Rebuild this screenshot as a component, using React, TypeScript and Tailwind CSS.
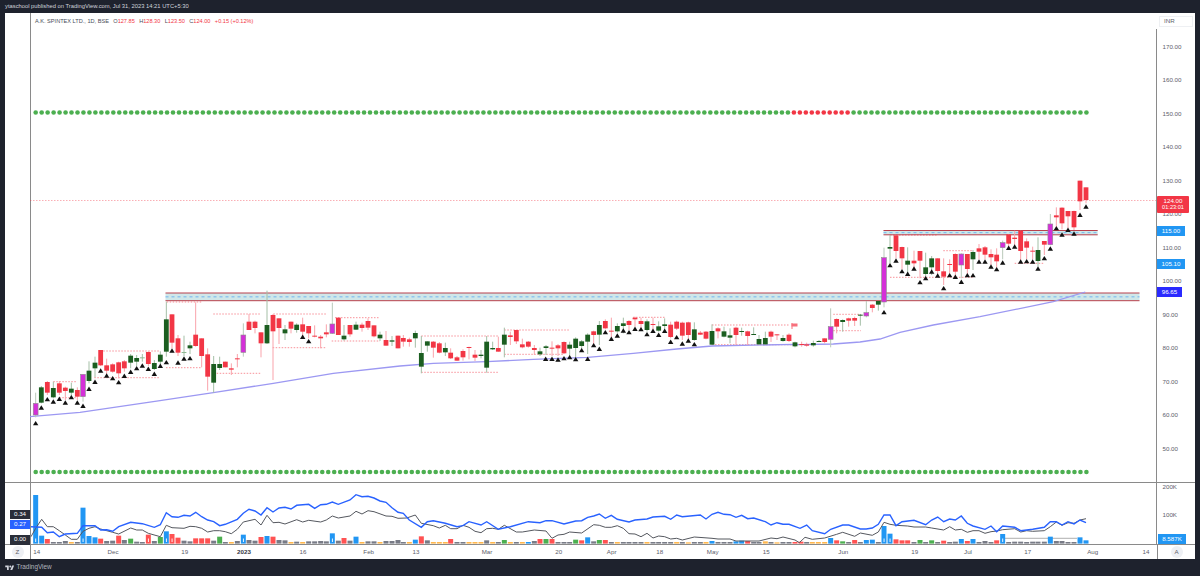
import React from "react";

type C = [number, number, number, number, number, string];
const z2: C[] = [[107,370,405,338,412,"p"],[124,322,368,318,370,"g"],[142,306,338,303,345,"r"],[160,324,352,305,355,"g"],[178,310,338,303,345,"r"],[196,323,333,320,360,"r"],[214,326,338,308,350,"g"],[232,330,350,322,360,"r"],[249,283,350,283,365,"p"],[267,272,303,244,310,"g"],[285,248,265,230,292,"g"],[302,210,256,210,258,"r"],[320,256,272,236,282,"r"],[338,253,275,250,278,"r"],[356,247,280,245,295,"r"],[373,244,265,240,275,"r"],[392,227,248,222,265,"g"],[410,234,245,225,258,"g"],[427,232,234,222,245,"l"],[445,216,252,214,258,"r"],[463,249,267,240,270,"g"],[481,224,245,214,252,"g"],[499,118,215,65,230,"g"],[516,103,188,103,205,"r"],[534,175,218,165,228,"r"],[552,216,219,167,228,"l"],[570,196,205,185,222,"g"],[587,164,198,67,200,"r"],[605,175,228,175,262,"r"],[623,223,290,205,332,"r"],[641,252,308,228,338,"g"],[659,252,264,230,270,"g"],[676,245,262,245,262,"r"],[694,265,269,250,285,"r"],[712,235,238,222,262,"r"],[730,165,217,130,230,"p"],[747,125,150,102,150,"r"],[765,125,144,122,160,"r"],[783,157,190,157,232,"r"],[801,135,190,32,192,"g"],[819,105,154,102,300,"r"],[837,115,144,115,192,"r"],[855,148,160,135,180,"g"],[873,125,146,125,160,"r"],[890,134,150,130,158,"g"],[908,133,155,113,172,"r"],[926,138,160,138,175,"r"],[944,167,170,136,172,"r"],[962,170,175,165,205,"r"],[979,157,163,133,172,"r"],[997,132,160,68,162,"p"],[1015,113,165,112,165,"r"],[1032,167,178,135,182,"g"],[1050,135,163,135,170,"r"],[1068,134,149,125,150,"g"],[1086,134,144,128,155,"r"],[1104,123,143,115,150,"r"],[1122,136,169,136,172,"r"],[1140,164,175,155,183,"g"],[1158,180,197,153,197,"r"],[1176,181,185,168,198,"g"],[1194,167,205,167,205,"r"]];
const z3: C[] = [[10,174,185,165,200,"r"],[28,178,186,173,200,"r"],[46,159,175,152,203,"g"],[64,219,260,168,280,"g"],[82,184,197,184,215,"g"],[100,185,203,183,233,"r"],[118,190,218,186,220,"r"],[136,204,217,188,228,"g"],[152,218,235,205,237,"r"],[171,232,242,228,243,"r"],[189,213,232,208,242,"r"],[207,201,203,200,238,"r"],[225,224,233,210,243,"r"],[243,224,228,210,235,"g"],[260,185,263,168,278,"g"],[278,204,208,185,210,"g"],[295,204,215,170,215,"r"],[313,164,194,143,232,"g"],[331,166,171,155,195,"r"],[349,150,184,150,192,"r"],[367,193,202,176,205,"r"],[385,185,200,183,203,"r"],[403,204,210,195,225,"r"],[420,214,223,203,228,"g"],[438,199,204,195,225,"g"],[456,203,205,184,228,"r"],[474,196,205,192,228,"r"],[492,186,220,184,222,"r"],[509,194,206,185,230,"g"],[527,176,204,172,232,"g"],[545,184,198,180,208,"g"],[563,164,185,160,222,"g"],[581,154,165,152,195,"r"],[598,135,164,123,195,"g"],[616,123,145,118,148,"r"],[634,152,155,113,172,"r"],[652,138,154,130,158,"g"],[670,130,138,113,160,"g"],[687,123,135,120,150,"r"],[705,113,118,110,140,"r"],[723,123,132,113,150,"r"],[741,124,150,118,155,"g"],[759,132,134,113,150,"r"],[776,139,152,124,155,"g"],[794,133,138,115,155,"g"],[812,134,171,125,175,"r"],[830,125,146,122,150,"r"],[847,128,167,125,180,"r"],[865,127,165,125,185,"r"],[883,148,180,127,182,"g"],[901,158,164,153,165,"r"],[918,155,176,153,178,"r"],[936,153,194,133,195,"g"],[954,145,154,142,175,"r"],[972,154,170,140,172,"g"],[990,166,173,145,190,"g"],[1008,143,165,140,195,"r"],[1025,153,155,143,167,"g"],[1043,154,168,152,195,"r"],[1061,162,163,142,165,"g"],[1077,177,193,165,195,"g"],[1096,174,193,155,195,"g"],[1113,155,170,152,186,"r"],[1131,163,165,162,180,"r"],[1149,174,183,165,185,"g"],[1167,164,183,160,186,"r"],[1185,187,199,185,202,"g"]];
const z4: C[] = [[5,522,525,515,530,"r"],[20,523,527,518,530,"r"],[40,519,526,512,530,"g"],[57,513,515,510,516,"g"],[74,505,516,505,520,"r"],[92,470,508,415,532,"p"],[110,447,470,445,490,"r"],[128,450,456,448,485,"g"],[146,445,452,443,470,"r"],[164,444,452,440,468,"r"],[181,434,436,432,467,"g"],[199,428,438,393,442,"p"],[217,404,414,402,427,"r"],[235,393,404,393,422,"g"],[252,263,396,233,412,"p"],[270,231,236,195,280,"g"],[288,196,243,195,265,"r"],[306,231,265,230,298,"r"],[323,272,284,232,310,"g"],[342,272,280,242,298,"r"],[360,243,272,243,325,"r"],[377,292,312,248,325,"g"],[395,265,292,258,315,"g"],[413,265,303,265,315,"r"],[431,304,320,265,345,"r"],[449,282,284,268,310,"r"],[466,252,305,250,320,"r"],[484,252,285,250,325,"p"],[502,252,297,252,312,"r"],[519,246,268,240,300,"g"],[537,235,245,222,268,"r"],[555,232,254,228,268,"r"],[573,252,262,238,285,"r"],[590,254,274,235,293,"r"],[608,218,233,212,268,"p"],[626,193,221,193,232,"r"],[644,203,207,182,225,"r"],[662,182,243,182,270,"r"],[680,214,233,205,268,"r"],[698,242,244,230,268,"r"],[714,240,273,202,290,"g"],[733,213,224,213,255,"r"],[751,162,224,132,226,"p"],[769,136,142,112,170,"r"],[786,113,160,112,178,"r"],[804,123,139,123,175,"r"],[822,123,172,122,180,"r"],[840,32,94,32,120,"r"],[858,52,90,52,100,"r"]];

const conv = (a: C[], x0: number, y0: number): C[] =>
  a.map(([x, t, b, wt, wb, c]) => [x0 + x / 3, y0 + t / 3, y0 + b / 3, y0 + wt / 3, y0 + wb / 3, c]);
const candles: C[] = [...conv(z2, 0, 280), ...conv(z3, 400, 280), ...conv(z4, 800, 170)];

const tri = (s: string, x0: number, y0: number) =>
  s.split(" ").map((p) => { const [x, y] = p.split(",").map(Number); return [x0 + x / 3, y0 + y / 3]; });
const triangles = [
  ...tri("107,430 124,383 142,358 160,365 178,357 196,368 214,352 232,368 249,378 267,327 285,306 302,272 320,287 338,295 356,307 373,288 392,276 410,265 427,257 445,267 463,282 481,258 499,247 516,212 534,248 552,236 570,235 908,171 926,184", 0, 280),
  ...tri("437,237 456,237 474,239 492,235 509,232 527,238 545,211 563,237 581,196 598,207 616,157 634,177 652,167 670,152 687,157 705,147 723,148 741,163 759,153 776,165 794,153 812,186 830,172 847,191 865,182 883,193", 400, 280),
  ...tri("252,427 270,286 288,272 306,304 323,312 342,296 360,337 377,325 395,305 413,317 431,355 449,316 466,321 484,336 502,316 519,316 537,275 555,275 573,290 590,298 608,278 626,234 644,230 662,275 680,274 698,275 714,296 733,265 751,236 769,175 786,194 804,180 822,191 840,135 858,110", 800, 170),
];

const dashes: [number, number, number][] = [
  [166.7, 201.7, 302], [213.3, 260.7, 314], [273.3, 326, 314], [335, 380, 317.7], [331.7, 380, 341], [272.7, 326.7, 347.7],
  [103.3, 160, 351], [166, 201.7, 367.7], [216.7, 260.7, 373.3], [94.3, 160, 377.7], [53.3, 77.3, 381.7], [59.3, 77.3, 397.7],
  [421.3, 498.3, 336], [421.3, 498.3, 372.3], [504.3, 570, 330], [504.3, 563.3, 354.3], [633, 665, 317.3],
  [712, 790, 325], [712, 795, 344.7], [833.3, 860.7, 314.3], [833.3, 861, 330.7],
  [890, 937.3, 235], [890, 973.3, 277.3], [943.3, 973.3, 250.7], [1014.7, 1044.3, 263.3],
];

const purpleLine = "30,416.7 80,412.3 160,400.7 213.3,392.7 273.3,383.3 333.3,373.3 400,366 433.3,363.3 486.7,361.7 533.3,359.3 587.7,357.3 633.3,353.3 676.7,349 712,346 795,344.3 800,344.7 833.3,344 860,342 880,339 900,332.3 933.3,325 980,316.7 1053.3,301.7 1085.3,292";

const parse = (s: string, x0: number) => s.split(" ").map((p) => { const [x, y] = p.split(",").map(Number); return `${(x0 + x / 3).toFixed(1)},${(470 + y / 3).toFixed(1)}`; }).join(" ");
const blueLine = [
  parse("93,170 125,172 142,188 160,186 178,200 196,192 232,190 249,167 285,167 302,180 320,179 338,184 356,170 392,157 427,161 463,172 481,164 499,128 516,140 534,142 552,136 570,138 587,127 605,140 623,150 641,155 659,167 676,163 712,148 730,130 747,118 765,123 783,135 801,113 819,126 837,114 855,112 873,117 890,106 926,103 944,115 962,104 979,103 997,96 1015,103 1050,90 1068,74 1086,80 1104,79 1122,84 1140,93 1158,97 1176,113 1194,127", 0),
  parse("10,130 28,150 64,172 82,155 100,152 136,160 171,170 189,167 207,155 243,165 260,155 295,178 331,170 385,155 420,158 438,152 456,152 492,162 527,153 545,152 563,142 581,138 598,132 616,145 634,136 652,148 687,156 705,150 741,147 759,141 794,139 812,148 830,135 847,140 901,135 918,147 936,133 954,127 972,133 990,134 1008,142 1025,136 1043,146 1061,144 1096,155 1113,165 1131,158 1149,163 1167,163", 400),
  parse("0,175 20,165 37,182 74,191 92,178 128,165 146,165 181,177 199,177 217,174 235,163 252,135 270,135 288,167 306,155 342,151 377,164 395,150 413,141 431,155 449,147 466,150 484,138 502,160 519,168 555,178 573,168 590,185 608,168 644,172 662,182 698,178 733,172 751,155 769,155 786,165 804,155 822,162 840,150 858,158", 800),
].join(" ");
const blackLine = [
  parse("93,200 107,175 125,148 142,170 160,170 178,182 196,195 214,208 232,208 249,184 267,175 285,170 302,177 320,182 338,187 356,192 392,174 410,180 427,180 445,190 481,200 499,166 516,173 552,175 570,169 587,170 605,175 623,186 641,182 659,182 676,185 694,191 712,178 730,156 765,148 783,165 801,136 819,158 837,157 855,162 890,149 908,156 926,151 962,156 979,150 997,138 1015,144 1050,138 1068,124 1086,132 1104,122 1122,125 1158,138 1176,139 1194,145", 0),
  parse("20,144 46,135 64,160 100,167 118,174 136,166 152,176 171,176 189,166 207,172 225,184 243,188 260,176 278,175 295,178 313,166 349,186 367,186 403,180 438,183 456,205 474,195 492,193 509,186 545,189 581,164 598,166 616,172 634,172 652,167 670,175 687,191 705,192 723,200 741,190 759,204 776,198 794,200 812,207 830,205 847,210 883,201 936,205 954,207 990,207 1008,213 1077,213 1113,204 1131,206 1149,201 1185,210 1198,218", 400),
  parse("15,202 37,208 74,204 110,193 128,187 164,199 181,189 217,196 235,186 252,157 270,163 288,166 323,168 342,171 377,171 395,174 431,180 449,170 466,180 484,178 502,187 519,182 537,182 555,190 573,185 590,183 608,179 644,176 662,186 680,182 698,184 733,182 751,170 769,156 786,166 804,158 822,160 840,150 858,146", 800),
].join(" ");

const volColor: Record<string, string> = { b: "#2196f3", r: "#ff5252", y: "#787b86", o: "#ffb74d", g: "#4caf50" };
const vol = (s: string, x0: number) => s.split(" ").map((p) => { const [x, t, c] = p.split(","); return { x: x0 + Number(x) / 3, t: 470 + Number(t) / 3, c }; });
const bars = [
  ...vol("107,75,b 125,197,b 142,207,r 160,216,y 178,216,y 196,213,y 214,216,o 232,216,y 249,113,b 267,198,b 285,202,b 302,206,r 320,213,y 338,212,y 356,197,r 373,210,y 392,206,g 410,215,y 427,216,y 445,194,r 463,213,y 481,201,g 499,184,b 516,192,r 534,203,r 552,212,y 570,214,y 587,205,r 605,205,r 623,205,r 641,212,y 659,200,g 676,216,y 694,216,o 712,213,y 730,194,b 747,210,y 765,212,y 783,201,r 801,198,b 819,200,r 837,210,y 855,211,y 873,216,o 890,215,y 908,216,o 926,214,y 944,214,y 962,213,y 979,214,y 997,190,b 1015,212,y 1032,204,r 1050,212,y 1068,200,b 1086,216,o 1104,214,y 1122,214,y 1140,216,o 1158,213,y 1176,213,y 1194,210,y", 0),
  ...vol("10,216,y 28,216,o 46,209,b 64,199,r 82,211,y 100,216,o 118,216,o 136,216,o 152,207,r 171,216,y 189,216,y 207,216,o 225,216,o 243,216,o 260,211,y 278,216,o 295,216,y 313,210,g 331,216,o 349,216,y 367,216,o 385,216,b 403,213,y 420,207,r 438,207,g 456,207,r 474,216,y 492,216,y 509,216,y 527,209,g 545,211,r 563,202,b 581,214,y 598,210,g 616,210,r 634,216,y 652,216,o 670,216,y 687,216,y 705,216,y 723,216,y 741,216,o 759,216,y 776,216,y 794,216,y 812,216,y 830,216,o 847,216,y 865,217,o 883,216,y 901,216,y 918,216,o 936,213,b 954,216,y 972,216,y 990,216,y 1008,214,b 1025,212,b 1043,213,r 1061,216,y 1077,216,y 1096,214,o 1113,216,y 1131,217,o 1149,216,y 1167,216,y 1185,216,r", 400),
  ...vol("3,215,r 20,216,y 37,216,o 55,216,o 74,216,o 92,204,b 110,211,r 128,214,g 146,216,y 164,210,r 181,216,y 199,210,b 217,209,b 235,216,y 252,168,b 270,191,b 288,208,r 306,211,r 323,211,r 342,216,y 360,210,g 377,216,y 395,211,g 413,216,y 431,212,r 449,216,y 466,215,y 484,207,b 502,213,r 519,207,b 537,216,y 555,213,y 573,216,y 590,211,r 608,192,b 626,216,y 644,215,y 662,215,y 680,216,y 698,215,y 714,215,y 733,215,y 751,200,b 769,213,y 786,213,y 804,216,y 822,216,y 840,202,b 858,211,b", 800),
];

const dotXs = Array.from({ length: 177 }, (_, i) => 35.7 + i * 5.97);
const prices = ["170.00", "160.00", "150.00", "140.00", "130.00", "120.00", "110.00", "100.00", "90.00", "80.00", "70.00", "60.00", "50.00"];
const times: [string, number, boolean?][] = [["14", 35.7], ["Dec", 112], ["19", 183.7], ["2023", 243, true], ["16", 302], ["Feb", 367.7], ["13", 415], ["Mar", 486], ["20", 557.7], ["Apr", 610.7], ["18", 658.7], ["May", 711.7], ["15", 765.3], ["Jun", 842.3], ["19", 913.7], ["Jul", 967], ["17", 1026.7], ["Aug", 1091.7], ["14", 1145]];

const body: Record<string, string> = { r: "#f23645", g: "#1b5e20", p: "#d42fd8", l: "#8fb893" };
const wick: Record<string, string> = { r: "#f9a3ab", g: "#a4bfa6", p: "#b9c9ba", l: "#a4bfa6" };

function Zone({ x1, x2, t, b }: { x1: number; x2: number; t: number; b: number }) {
  return (
    <g>
      <rect x={x1} y={t} width={x2 - x1} height={b - t} fill="#cfe7e9" />
      <line x1={x1} x2={x2} y1={(t + b) / 2} y2={(t + b) / 2} stroke="#5aa9f0" strokeWidth={0.8} strokeDasharray="3 3" />
      <line x1={x1} x2={x2} y1={t} y2={t} stroke="#b8404c" strokeWidth={1} />
      <line x1={x1} x2={x2} y1={b} y2={b} stroke="#b8404c" strokeWidth={1} />
    </g>
  );
}

export default function App() {
  return (
    <div className="flex h-[576px] w-[1200px] flex-col overflow-hidden bg-[#1e222d] font-['Liberation_Sans',sans-serif]">
      <div className="flex h-[13px] items-center pl-[5px] text-[5.8px] leading-none text-[#d1d4dc]">
        ytaschool published on TradingView.com, Jul 31, 2023 14:21 UTC+5:30
      </div>

      <div className="mx-[5px] grid h-[546px] w-[1190px] grid-cols-[25px_1127px_38px] grid-rows-[469px_62px_15px] bg-white">
        <div />
        <div className="relative border-l border-[#8a8a8a]">
          <svg className="absolute left-[-1px] top-0 overflow-visible" width="1128" height="469" viewBox="30 13 1128 469">
            <Zone x1={165.5} x2={1139.5} t={293} b={300.7} />
            <Zone x1={883.5} x2={1097.7} t={230.5} b={234.8} />
            <line x1={30} x2={1157} y1={200.5} y2={200.5} stroke="#f23645" strokeOpacity={0.5} strokeWidth={0.8} strokeDasharray="1.5 1.5" />
            {dashes.map(([a, b, y], i) => (
              <line key={i} x1={a} x2={b} y1={y} y2={y} stroke="#f23645" strokeOpacity={0.55} strokeWidth={1} strokeDasharray="1.5 1.5" />
            ))}
            <polyline points={purpleLine} fill="none" stroke="#9c98f2" strokeWidth={1.3} />
            {candles.map(([x, t, b, wt, wb, c], i) => (
              <g key={i}>
                <line x1={x} x2={x} y1={wt} y2={wb} stroke={wick[c]} strokeWidth={1} />
                <rect x={x - 2.4} y={t} width={4.8} height={Math.max(b - t, 1)} fill={body[c]} stroke={c === "p" ? "#8d8d8d" : "none"} strokeWidth={0.6} />
              </g>
            ))}
            <rect x={791.5} y={323.5} width={6} height={3} fill="#f7707c" />
            <line x1={792} x2={792} y1={323} y2={329} stroke="#f7707c" strokeWidth={1} />
            {triangles.map(([x, y], i) => (
              <polygon key={i} points={`${x},${y - 2.4} ${x + 2.7},${y + 2} ${x - 2.7},${y + 2}`} fill="#111" />
            ))}
            {dotXs.map((x, i) => (
              <circle key={i} cx={x} cy={112.5} r={2.3} fill={x > 790 && x < 853 ? "#f23645" : "#4caf50"} />
            ))}
            {dotXs.map((x, i) => (
              <circle key={i} cx={x} cy={472} r={2.3} fill="#4caf50" />
            ))}
          </svg>
          <div className="absolute left-[4px] top-[3.5px] flex gap-[4.4px] whitespace-nowrap text-[5.6px] leading-[8px] text-[#f23645]">
            <span className="text-[#4a4e59]">A.K. SPINTEX LTD., 1D, BSE</span>
            <span><span className="text-[#4a4e59]">O</span>127.85</span>
            <span><span className="text-[#4a4e59]">H</span>128.30</span>
            <span><span className="text-[#4a4e59]">L</span>123.50</span>
            <span><span className="text-[#4a4e59]">C</span>124.00</span>
            <span>+0.15 (+0.12%)</span>
          </div>
        </div>
        <div className="relative flex flex-col items-start pl-[5.5px] text-[6.2px] leading-none text-[#5d606b]">
          <div className="absolute left-[2px] top-[3px] flex h-[11px] w-[34px] items-center border border-[#eef0f3] pl-[4px]">INR</div>
          <div className="absolute bottom-0 left-[-1px] top-[16px] w-px bg-[#8a8a8a]" />
          <div className="mt-[17.25px] flex flex-col">
            {prices.map((p) => (
              <div key={p} className="flex h-[33.5px] items-center">{p}</div>
            ))}
          </div>
          <div className="absolute left-[0px] top-[183px] flex h-[17px] w-[32px] flex-col items-center justify-center rounded-[1px] bg-[#f23645] text-white">
            <span>124.00</span>
            <span className="mt-[1px] text-[5.6px]">01:23:01</span>
          </div>
          <div className="absolute left-[0px] top-[213px] flex h-[9.5px] w-[28px] items-center justify-center bg-[#2196f3] text-white">115.00</div>
          <div className="absolute left-[0px] top-[246px] flex h-[9.5px] w-[28px] items-center justify-center bg-[#2196f3] text-white">105.10</div>
          <div className="absolute left-[0px] top-[274px] flex h-[10px] w-[25px] items-center justify-center bg-[#2a2aff] text-white">96.65</div>
        </div>

        <div className="relative border-t border-[#8a8a8a] text-[6.2px] leading-none text-white">
          <div className="absolute left-[5px] top-[26.5px] flex h-[9.5px] w-[20px] items-center justify-center bg-[#2a2e39]">0.34</div>
          <div className="absolute left-[5px] top-[36.5px] flex h-[9.5px] w-[20px] items-center justify-center bg-[#2962ff]">0.27</div>
          <div className="absolute left-[5px] top-[51.5px] flex h-[10px] w-[20px] items-center justify-center bg-[#2a2e39]">0.00</div>
        </div>
        <div className="relative border-l border-t border-[#8a8a8a]">
          <svg className="absolute left-[-1px] top-[-1px] overflow-visible" width="1128" height="62" viewBox="30 482 1128 62">
            <line x1={1003} x2={1077} y1={538.3} y2={538.3} stroke="#9a9a9a" strokeWidth={0.8} />
            {bars.map((b, i) => (
              <rect key={i} x={b.x - 2.5} y={b.t} width={5} height={Math.max(543.6 - b.t, 0.8)} fill={volColor[b.c]} />
            ))}
            {bars.filter((b) => b.t < 535).map((b, i) => (
              <rect key={i} x={b.x - 0.4} y={538.5} width={0.9} height={3.5} fill="#fff" />
            ))}
            <polyline points={blackLine} fill="none" stroke="#55585f" strokeWidth={1} />
            <polyline points={blueLine} fill="none" stroke="#2962ff" strokeWidth={1.4} />
          </svg>
        </div>
        <div className="relative border-t border-[#8a8a8a] text-[6.2px] leading-none text-[#5d606b]">
          <div className="absolute bottom-0 left-[-1px] top-[-1px] w-px bg-[#8a8a8a]" />
          <span className="absolute left-[5.5px] top-[1px]">200K</span>
          <span className="absolute left-[5.5px] top-[29px]">100K</span>
          <div className="absolute left-[1px] top-[51px] flex h-[10px] w-[28px] items-center justify-center bg-[#2196f3] text-white">8.587K</div>
        </div>

        <div className="flex items-center justify-end border-t border-[#8a8a8a] pr-[6.5px]">
          <div className="flex h-[12px] w-[12px] shrink-0 items-center justify-center rounded-full bg-[#eef0f4] text-[6.2px] text-[#5d606b]">Z</div>
        </div>
        <div className="relative border-l border-t border-[#8a8a8a] text-[6.2px] leading-none text-[#5d606b]">
          {times.map(([t, x, bold]) => (
            <span key={t + x} className={bold ? "absolute top-[4px] -translate-x-1/2 font-bold text-[#33363f]" : "absolute top-[4px] -translate-x-1/2"} style={{ left: x - 30 }}>{t}</span>
          ))}
        </div>
        <div className="relative flex items-center justify-center border-l border-t border-[#8a8a8a]">
          <div className="flex h-[12px] w-[12px] items-center justify-center rounded-full bg-[#eef0f4] text-[6.2px] text-[#5d606b]">A</div>
        </div>
      </div>

      <div className="flex h-[17px] items-center gap-[2px] pl-[5px] text-[6.4px] leading-none text-[#b2b5be]">
        <svg width="9.5" height="5.5" viewBox="0 2 36 22" fill="#d1d4dc"><path d="M14 22H7V11H0V4h14v18zM28 22h-8l7.5-18h8L28 22z" /><circle cx="20" cy="8" r="4" /></svg>
        <span>TradingView</span>
      </div>
    </div>
  );
}
